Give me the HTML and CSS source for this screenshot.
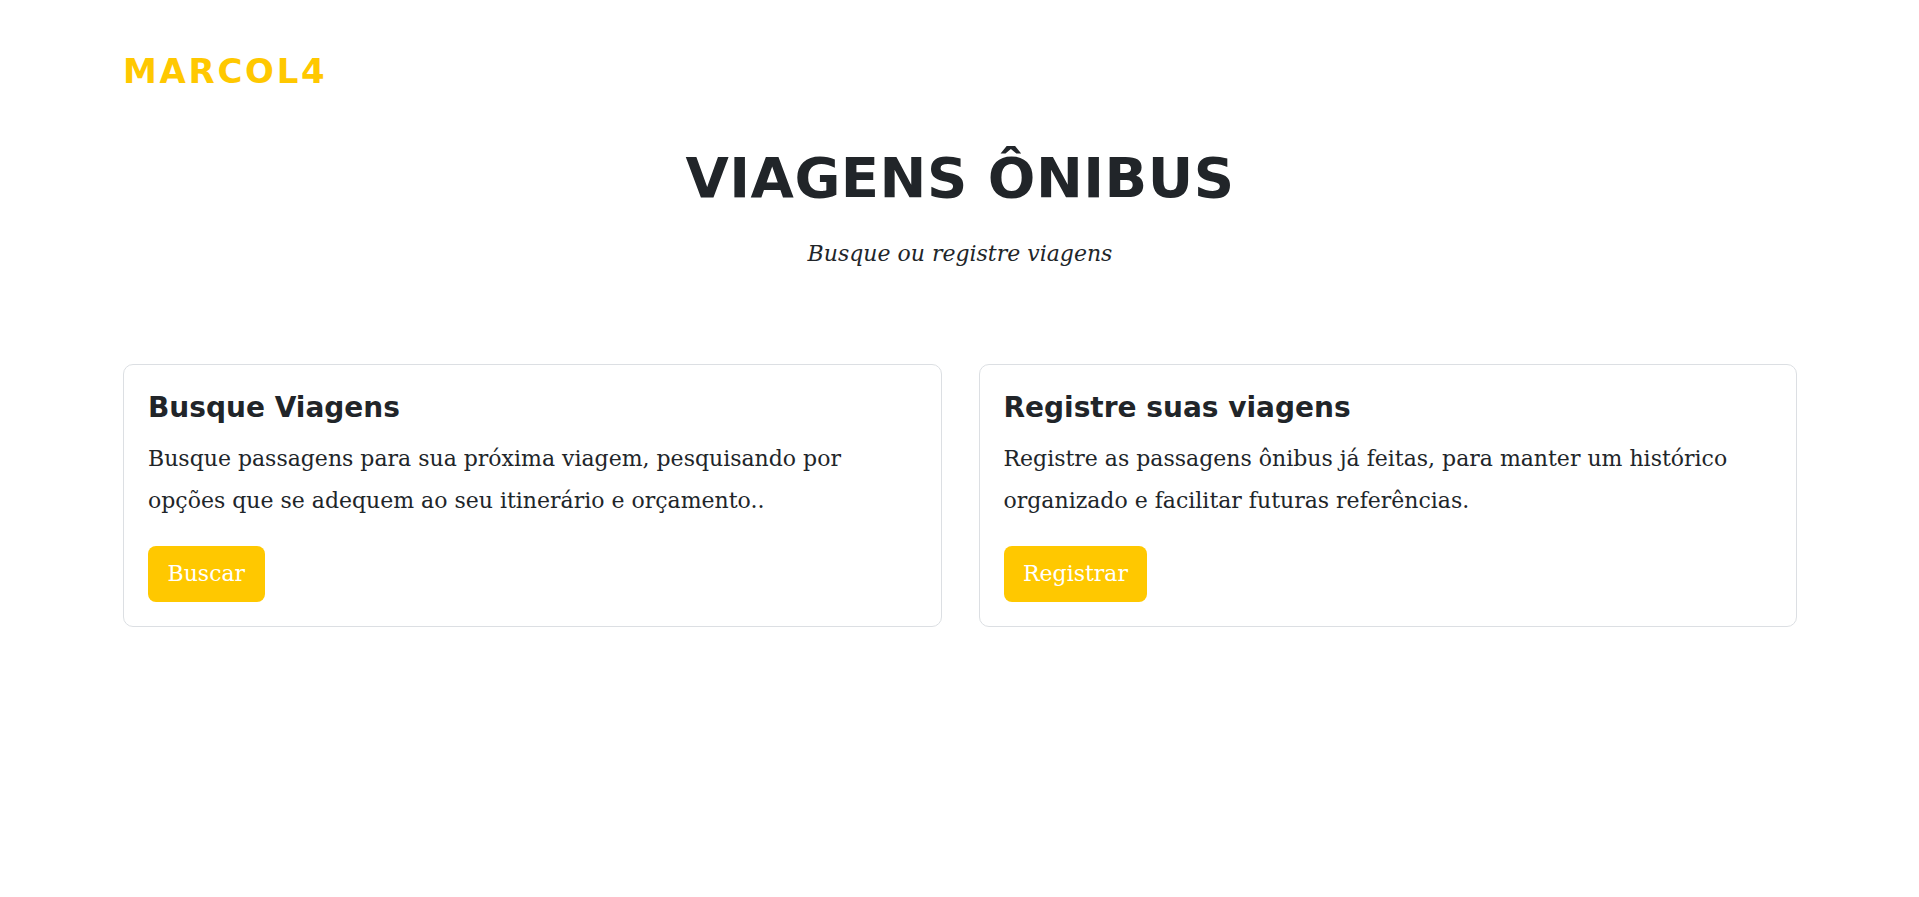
FILE: index.html
```html
<!DOCTYPE html>
<html lang="pt-BR">
<head>
<meta charset="utf-8">
<title>Viagens Ônibus</title>
<link rel="stylesheet" href="styles.css">
</head>
<body>
<header class="topbar">
  <a class="brand" href="#">MARCOL4</a>
</header>
<main class="page">
  <section class="hero">
    <h1 class="hero-title">VIAGENS ÔNIBUS</h1>
    <p class="hero-sub">Busque ou registre viagens</p>
  </section>
  <section class="cards">
    <article class="card">
      <h2 class="card-title">Busque Viagens</h2>
      <p class="card-text">Busque passagens para sua próxima viagem, pesquisando por opções que se adequem ao seu itinerário e orçamento..</p>
      <a class="btn" href="#">Buscar</a>
    </article>
    <article class="card">
      <h2 class="card-title">Registre suas viagens</h2>
      <p class="card-text">Registre as passagens ônibus já feitas, para manter um histórico organizado e facilitar futuras referências.</p>
      <a class="btn" href="#">Registrar</a>
    </article>
  </section>
</main>
</body>
</html>
```
FILE: styles.css
```css
* { box-sizing: border-box; }
html, body { margin: 0; padding: 0; background: #fff; }
body {
  font-family: "DejaVu Serif", "Liberation Serif", serif;
  color: #212529;
}
.topbar {
  padding: 54px 123px 0;
}
.brand {
  display: inline-block;
  font-family: "DejaVu Sans", "Liberation Sans", sans-serif;
  font-weight: 700;
  font-size: 34px;
  line-height: 34px;
  letter-spacing: 2.7px;
  color: #ffc800;
  text-decoration: none;
}
.page {
  padding: 0 122px 0 123px;
}
.hero {
  text-align: center;
  margin-top: 62px;
}
.hero-title {
  margin: 0;
  font-family: "DejaVu Sans", "Liberation Sans", sans-serif;
  font-weight: 700;
  font-size: 56px;
  line-height: 56px;
  letter-spacing: 0.5px;
  color: #212529;
}
.hero-sub {
  margin: 36px 0 0;
  font-style: italic;
  font-size: 22px;
  line-height: 24px;
}
.cards {
  display: grid;
  grid-template-columns: 1fr 1fr;
  gap: 37px;
  margin-top: 98px;
}
.card {
  border: 1px solid #dcdfe3;
  border-radius: 10px;
  padding: 25px 24px 24px;
}
.card-title {
  margin: 0;
  font-family: "DejaVu Sans", "Liberation Sans", sans-serif;
  font-weight: 700;
  font-size: 28px;
  line-height: 36px;
}
.card-text {
  margin: 12px 0 24px;
  font-size: 22px;
  line-height: 42px;
}
.btn {
  display: inline-block;
  background: #ffc800;
  color: #fff;
  text-decoration: none;
  font-size: 22px;
  line-height: 56px;
  padding: 0 19.5px;
  border-radius: 8px;
}
```
